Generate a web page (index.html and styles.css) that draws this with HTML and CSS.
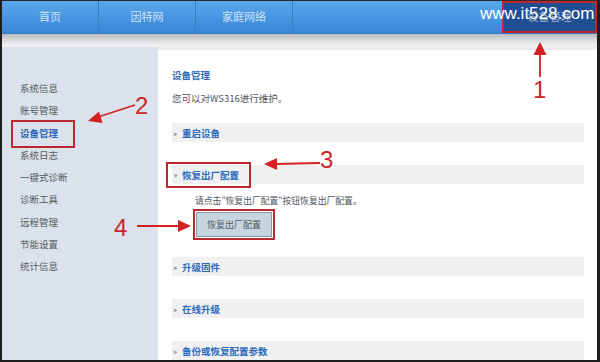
FILE: index.html
```html
<!DOCTYPE html>
<html lang="zh">
<head>
<meta charset="utf-8">
<link rel="stylesheet" href="styles.css">
</head>
<body>
<div class="page">
  <nav class="nav">
    <div class="tab">首页</div>
    <div class="tab">因特网</div>
    <div class="tab">家庭网络</div>
    <div class="tab active">设备管理</div>
  </nav>
  <div class="shade"></div>
  <div class="main">
    <aside class="sidebar">
      <ul class="menu">
        <li>系统信息</li>
        <li>账号管理</li>
        <li><span class="current">设备管理</span></li>
        <li>系统日志</li>
        <li>一键式诊断</li>
        <li>诊断工具</li>
        <li>远程管理</li>
        <li>节能设置</li>
        <li>统计信息</li>
      </ul>
    </aside>
    <section class="content">
      <h1 class="title">设备管理</h1>
      <p class="desc">您可以对WS316进行维护。</p>
      <div class="bar first"><span class="tri">&#9656;</span><span class="label">重启设备</span></div>
      <div class="bar open"><span class="head-box"><span class="tri">&#9662;</span><span class="label">恢复出厂配置</span></span></div>
      <div class="panel">
        <p class="hint">请点击"恢复出厂配置"按钮恢复出厂配置。</p>
        <button class="btn">恢复出厂配置</button>
      </div>
      <div class="bar after-panel"><span class="tri">&#9656;</span><span class="label">升级固件</span></div>
      <div class="bar"><span class="tri">&#9656;</span><span class="label">在线升级</span></div>
      <div class="bar"><span class="tri">&#9656;</span><span class="label">备份或恢复配置参数</span></div>
    </section>
  </div>

  <svg class="arrows" width="600" height="362" viewBox="0 0 600 362">
    <g stroke="#d42020" stroke-width="1.8" fill="none">
      <line x1="540" y1="52" x2="540" y2="77"/>
      <line x1="135" y1="105" x2="98" y2="117"/>
      <line x1="320" y1="163" x2="275" y2="164"/>
      <line x1="137" y1="226" x2="180" y2="226"/>
    </g>
    <g fill="#d42020">
      <polygon points="540,42 533.5,55 546.5,55"/>
      <polygon points="88,121 99,111.5 102.5,123"/>
      <polygon points="264,164 277,158 277,170"/>
      <polygon points="191,226 178,220 178,232"/>
    </g>
  </svg>
  <span class="num n1">1</span>
  <span class="num n2">2</span>
  <span class="num n3">3</span>
  <span class="num n4">4</span>
  <span class="mark">www.it528.com</span>
</div>
</body>
</html>
```

FILE: styles.css
```css
* { box-sizing: border-box; }
html, body { margin: 0; padding: 0; background: #ffffff; }
body { font-family: "Noto Sans CJK SC", "Liberation Sans", sans-serif; }

.page {
  position: relative;
  width: 600px;
  height: 362px;
  overflow: hidden;
  border-top: 1px solid #2a2a2a;
  border-left: 2px solid #1e1e1e;
  border-right: 3px solid #1e1e1e;
  border-bottom: 2px solid #1e1e1e;
  background: #e8ebef;
  display: flex;
  flex-direction: column;
}

.nav {
  height: 33px;
  display: flex;
  background: linear-gradient(#5aa7ee, #4593e0 60%, #3a86d6);
  border-bottom: 1px solid #3479c4;
  flex-shrink: 0;
}
.tab {
  width: 97px;
  border-right: 1px solid #3a7cc4;
  color: #cfe2f6;
  font-size: 11px;
  display: flex;
  align-items: center;
  justify-content: center;
  padding-bottom: 2px;
}
.tab.active {
  margin-left: auto;
  width: 95px;
  border-right: none;
  background: #1f4e94;
  color: #9fb3cf;
  outline: 2px solid #c0262c;
  outline-offset: -2px;
}

.shade {
  height: 13px;
  flex-shrink: 0;
  background: linear-gradient(#b9bcc0, #d6d8da 45%, #ecedee 80%, #f1f1f1);
}

.main {
  flex: 1;
  display: flex;
  min-height: 0;
}

.sidebar {
  width: 156px;
  background: #dbe2eb;
  padding: 30px 0 0 18px;
  flex-shrink: 0;
}
.menu {
  list-style: none;
  margin: 0;
  padding: 0;
}
.menu li {
  height: 22.3px;
  line-height: 22.3px;
  font-size: 9.5px;
  color: #555a60;
}
.current {
  color: #2a66b8;
  font-weight: 700;
  outline: 2px solid #c0262c;
  outline-offset: 0;
  display: inline-block;
  line-height: 22px;
  padding: 0 15px 0 7px;
  margin-left: -7px;
  height: 24px;
  margin-top: -1px;
}

.content {
  flex: 1;
  background: #ffffff;
  margin-top: 3px;
  padding: 17px 13px 0 14px;
}
.title {
  margin: 0;
  font-size: 9.5px;
  line-height: 16px;
  color: #2a6ab9;
  font-weight: 700;
}
.desc {
  margin: 7px 0 0 0;
  font-size: 9.5px;
  line-height: 16px;
  color: #50555a;
}

.bar {
  height: 19px;
  background: #f0f0f1;
  display: flex;
  align-items: center;
  padding-left: 2px;
  margin-top: 23px;
}
.bar.first { margin-top: 17px; }
.bar.after-panel { margin-top: 20px; }
.tri {
  color: #9a9a9a;
  font-size: 7px;
  width: 8px;
}
.label {
  font-size: 9.5px;
  font-weight: 700;
  color: #2a6ab9;
}
.head-box {
  display: inline-flex;
  align-items: center;
  outline: 2px solid #c0262c;
  outline-offset: 0;
  height: 22px;
  margin-left: -6px;
  padding: 0 10px 0 6px;
}

.panel {
  padding-left: 23px;
}
.hint {
  margin: 10px 0 0 0;
  font-size: 8.8px;
  line-height: 14px;
  color: #50555a;
}
.btn {
  margin-top: 4px;
  margin-left: 1px;
  width: 76px;
  height: 25px;
  background: #c6d5e0;
  border: 1px solid #8c9aa6;
  font-family: "Noto Sans CJK SC", sans-serif;
  font-size: 9px;
  color: #555a60;
  padding: 0;
  outline: 2px solid #c0262c;
  outline-offset: 1px;
}

.arrows {
  position: absolute;
  left: -2px;
  top: -1px;
  pointer-events: none;
}
.num {
  position: absolute;
  font-family: "Liberation Sans", sans-serif;
  font-size: 24px;
  line-height: 1;
  color: #c8262a;
}
.n1 { left: 531px; top: 77px; }
.n2 { left: 133px; top: 93px; }
.n3 { left: 318px; top: 147px; }
.n4 { left: 112px; top: 215px; }
.mark {
  position: absolute;
  left: 478px;
  top: 4px;
  font-family: "Liberation Sans", sans-serif;
  font-size: 17px;
  line-height: 1;
  color: #ffffff;
}
```
